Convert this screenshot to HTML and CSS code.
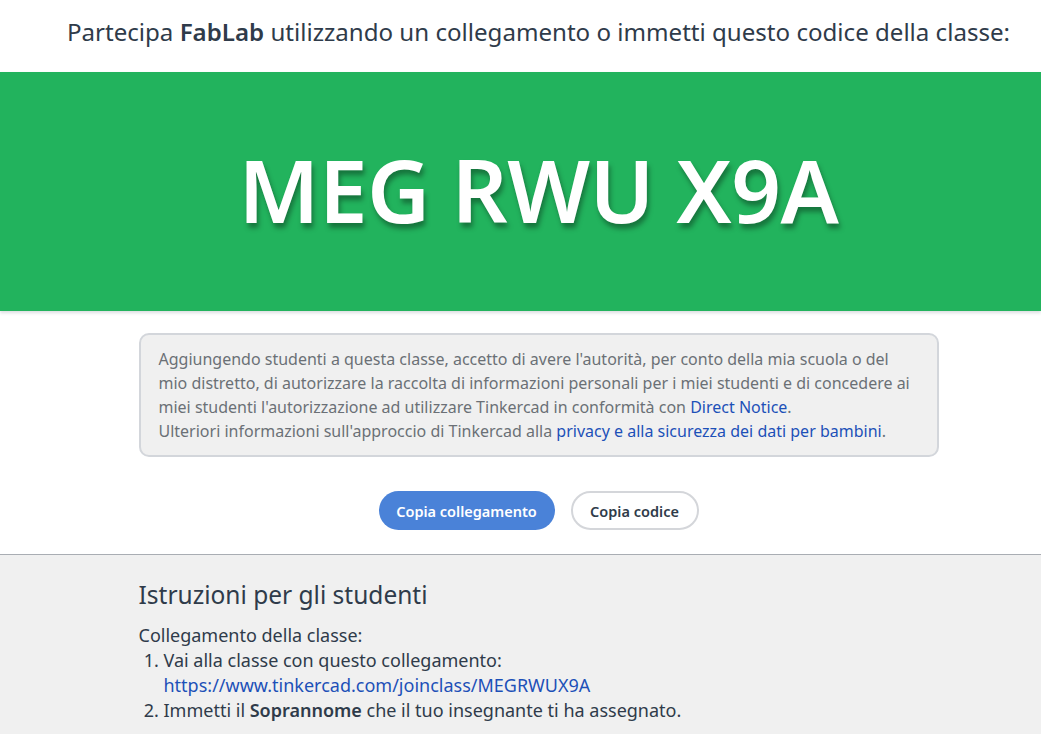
FILE: index.html
```html
<!DOCTYPE html>
<html lang="it">
<head>
<meta charset="utf-8">
<title>Partecipa FabLab</title>
<link rel="stylesheet" href="styles.css">
</head>
<body>
<header class="top">
  <h1 class="title">Partecipa <strong>FabLab</strong> utilizzando un collegamento o immetti questo codice della classe:</h1>
</header>
<section class="code-band">
  <div class="code">MEG RWU X9A</div>
</section>
<section class="consent">
  <div class="notice">
    <p>Aggiungendo studenti a questa classe, accetto di avere l'autorità, per conto della mia scuola o del mio distretto, di autorizzare la raccolta di informazioni personali per i miei studenti e di concedere ai miei studenti l'autorizzazione ad utilizzare Tinkercad in conformità con <a href="#">Direct Notice</a>.</p>
    <p>Ulteriori informazioni sull'approccio di Tinkercad alla <a href="#">privacy e alla sicurezza dei dati per bambini</a>.</p>
  </div>
  <div class="actions">
    <button class="btn btn-primary">Copia collegamento</button>
    <button class="btn btn-outline">Copia codice</button>
  </div>
</section>
<section class="instructions">
  <div class="inner">
    <h2>Istruzioni per gli studenti</h2>
    <p class="label">Collegamento della classe:</p>
    <ol>
      <li>Vai alla classe con questo collegamento:<br><a href="#">https://www.tinkercad.com/joinclass/MEGRWUX9A</a></li>
      <li>Immetti il <strong>Soprannome</strong> che il tuo insegnante ti ha assegnato.</li>
    </ol>
  </div>
</section>
</body>
</html>
```

FILE: styles.css
```css
html, body {
  margin: 0;
  padding: 0;
  background: #ffffff;
  font-family: "Noto Sans", "DejaVu Sans", sans-serif;
  color: #2c3e50;
}
.top {
  height: 72px;
  box-sizing: border-box;
  display: flex;
  align-items: center;
  justify-content: center;
  padding-left: 36px;
  padding-bottom: 9px;
}
.title {
  margin: 0;
  font-size: 24.1px;
  font-weight: 400;
  color: #2f3b4a;
  white-space: nowrap;
}
.title strong { font-weight: 600; }
.code-band {
  height: 239px;
  background: #22b35d;
  display: flex;
  align-items: center;
  justify-content: center;
  padding-left: 36px;
  box-shadow: 0 2px 3px rgba(60, 70, 90, 0.18);
}
.code {
  font-size: 87px;
  font-weight: 600;
  color: #ffffff;
  letter-spacing: -0.5px;
  text-shadow: 2px 5px 5px rgba(0, 0, 0, 0.35);
  transform: translateY(-3px);
}
.consent {
  padding-top: 22px;
  padding-bottom: 24px;
  padding-left: 36px;
  border-bottom: 1px solid #a9adb3;
  display: flex;
  flex-direction: column;
  align-items: center;
}
.notice {
  width: 758px;
  padding: 12px 20px 12px 18px;
  background: #f0f0f0;
  border: 2px solid #d3d6db;
  border-radius: 10px;
  font-size: 16px;
  line-height: 24px;
  color: #6b7076;
}
.notice p { margin: 0; }
.notice a { color: #1d50b8; text-decoration: none; }
.actions {
  margin-top: 34px;
  display: flex;
  gap: 16px;
}
.btn {
  height: 39px;
  border-radius: 20px;
  font-family: inherit;
  font-size: 14.5px;
  font-weight: 600;
  padding: 0;
  cursor: pointer;
}
.btn-primary {
  background: #4a82d8;
  color: #ffffff;
  border: none;
  width: 176px;
}
.btn-outline {
  background: #ffffff;
  color: #2f3b4a;
  border: 2px solid #d4d6da;
  width: 128px;
}
.instructions {
  background: #f0f0f0;
  min-height: 180px;
  padding-left: 36px;
}
.inner {
  width: 800px;
  margin: 0 auto;
  padding-top: 23px;
}
.inner h2 {
  margin: 0;
  font-size: 24.5px;
  font-weight: 400;
  color: #2f3b4a;
  line-height: 34px;
}
.label {
  margin: 11px 0 0;
  font-size: 18px;
  line-height: 25px;
  color: #2f3b4a;
}
ol {
  margin: 0;
  padding-left: 25px;
  font-size: 18px;
  line-height: 25px;
  color: #2f3b4a;
}
ol a { color: #1d50b8; text-decoration: none; }
ol strong { font-weight: 600; }
```
